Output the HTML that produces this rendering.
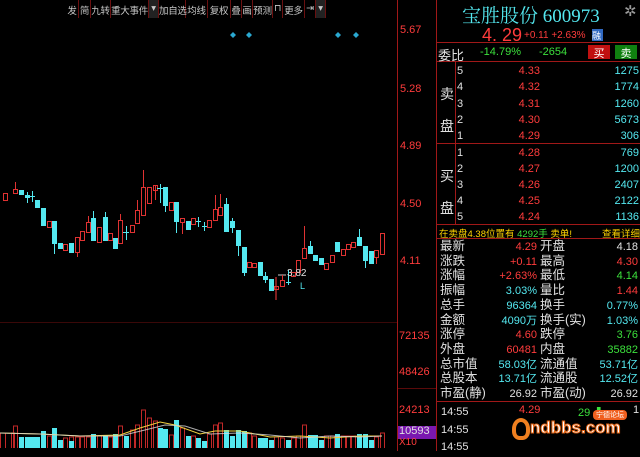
<!DOCTYPE html>
<html><head><meta charset="utf-8"><style>
*{margin:0;padding:0;box-sizing:border-box}
body{width:640px;height:451px;background:#000;overflow:hidden;position:relative;font-family:"Liberation Sans","Noto Sans CJK SC",sans-serif;font-size:12px}
.a{position:absolute;white-space:nowrap}
.r{color:#ff3c3c}.c{color:#54e8f0}.g{color:#3ce03c}.w{color:#e0e0e0}.y{color:#ffd400}
.t{position:absolute;top:0;height:18px;font-size:9.5px;color:#c8c8c8;padding-top:3px;border-right:1px solid #6a1010;text-align:center;white-space:nowrap;overflow:visible;letter-spacing:-0.3px}
.rt{text-align:right}
</style></head><body>
<div class="t" style="left:66px;width:13px">发</div>
<div class="t" style="left:79px;width:12px">简</div>
<div class="t" style="left:91px;width:20px">九转</div>
<div class="t" style="left:111px;width:38px">重大事件</div>
<div class="t" style="left:149px;width:10px;background:#222">▾</div>
<div class="t" style="left:159px;width:27px">加自选</div>
<div class="t" style="left:186px;width:22px">均线</div>
<div class="t" style="left:208px;width:23px">复权</div>
<div class="t" style="left:231px;width:11px">叠</div>
<div class="t" style="left:242px;width:11px">画</div>
<div class="t" style="left:253px;width:20px">预测</div>
<div class="t" style="left:273px;width:10px">⊓</div>
<div class="t" style="left:283px;width:22px">更多</div>
<div class="t" style="left:305px;width:11px">⇥</div>
<div class="t" style="left:316px;width:10px;background:#222">▾</div>
<svg class="a" style="left:0;top:0" width="640" height="451">
<g fill="#2aa8d0"><path d="M233 32l3 3-3 3-3-3z"/><path d="M249 32l3 3-3 3-3-3z"/><path d="M338 32l3 3-3 3-3-3z"/><path d="M356 32l3 3-3 3-3-3z"/></g>
<line x1="397.5" y1="0" x2="397.5" y2="451" stroke="#a01818"/>
<line x1="436.5" y1="0" x2="436.5" y2="451" stroke="#a01818"/>
<line x1="0" y1="322.5" x2="397" y2="322.5" stroke="#3a0808"/>
<line x1="437" y1="42.5" x2="640" y2="42.5" stroke="#a01818"/>
<line x1="437" y1="61.5" x2="640" y2="61.5" stroke="#a01818"/>
<line x1="437" y1="143.5" x2="640" y2="143.5" stroke="#a01818"/>
<line x1="437" y1="224.5" x2="640" y2="224.5" stroke="#a01818"/>
<line x1="437" y1="238.5" x2="640" y2="238.5" stroke="#a01818"/>
<line x1="437" y1="401.5" x2="640" y2="401.5" stroke="#a01818"/>
<line x1="455.5" y1="62" x2="455.5" y2="224" stroke="#a01818"/>
<line x1="398" y1="388.5" x2="436" y2="388.5" stroke="#5a0a0a"/>
<rect x="398" y="426" width="38" height="13" fill="#7a18b0"/>
<line x1="276" y1="277" x2="276" y2="300" stroke="#ff3c3c"/>
<line x1="278" y1="275" x2="286" y2="275" stroke="#ccc"/>
<g stroke-width="1">
<g fill="none" stroke="#e03232">
<rect x="3.5" y="193.5" width="4" height="7"/><rect x="13.5" y="189.5" width="4" height="4"/><line x1="15.5" y1="182" x2="15.5" y2="189"/>
<rect x="47.5" y="221.5" width="4" height="6"/><rect x="63.5" y="244.5" width="4" height="6"/><rect x="75.5" y="237.5" width="4" height="15"/><line x1="77.5" y1="253" x2="77.5" y2="257"/>
<rect x="80.5" y="231.5" width="4" height="9"/><rect x="86.5" y="222.5" width="4" height="10"/><line x1="88.5" y1="216" x2="88.5" y2="222"/>
<rect x="97.5" y="227.5" width="4" height="15"/><rect x="108.5" y="233.5" width="4" height="7"/><rect x="118.5" y="220.5" width="4" height="23"/><line x1="120.5" y1="214" x2="120.5" y2="220"/>
<rect x="130.5" y="225.5" width="4" height="7"/><rect x="135.5" y="210.5" width="4" height="13"/><line x1="137.5" y1="200" x2="137.5" y2="210"/>
<rect x="141.5" y="187.5" width="4" height="28"/><line x1="143.5" y1="170" x2="143.5" y2="187"/><rect x="147.5" y="187.5" width="4" height="16"/><rect x="153.5" y="185.5" width="4" height="5"/><line x1="155.5" y1="185" x2="155.5" y2="200"/>
<rect x="169.5" y="202.5" width="4" height="8"/><rect x="180.5" y="218.5" width="4" height="4"/><line x1="182.5" y1="222" x2="182.5" y2="234"/>
<rect x="191.5" y="218.5" width="4" height="6"/><rect x="207.5" y="220.5" width="4" height="7"/><rect x="213.5" y="209.5" width="4" height="11"/><line x1="215.5" y1="195" x2="215.5" y2="209"/><rect x="218.5" y="207.5" width="4" height="8"/><line x1="220.5" y1="194" x2="220.5" y2="207"/>
<rect x="247.5" y="262.5" width="4" height="5"/><rect x="252.5" y="263.5" width="4" height="4"/><rect x="274.5" y="286.5" width="4" height="3"/><rect x="280.5" y="280.5" width="4" height="6"/><line x1="282.5" y1="275" x2="282.5" y2="280"/>
<rect x="291.5" y="272.5" width="4" height="4"/><rect x="296.5" y="260.5" width="4" height="12"/><rect x="302.5" y="248.5" width="4" height="10"/><line x1="304.5" y1="226" x2="304.5" y2="248"/>
<rect x="324.5" y="263.5" width="4" height="6"/><rect x="330.5" y="255.5" width="4" height="7"/><rect x="341.5" y="249.5" width="4" height="6"/><rect x="346.5" y="244.5" width="4" height="5"/><rect x="351.5" y="242.5" width="4" height="5"/>
<rect x="374.5" y="250.5" width="4" height="7"/><line x1="376.5" y1="257" x2="376.5" y2="264"/><rect x="380.5" y="233.5" width="4" height="21"/>
</g>
<g fill="#54e8f0" stroke="#54e8f0">
<rect x="19.5" y="190.5" width="4" height="4"/><rect x="25.5" y="195.5" width="4" height="2"/><line x1="27.5" y1="192" x2="27.5" y2="203"/><line x1="30" y1="196.5" x2="35" y2="196.5"/><line x1="32.5" y1="191" x2="32.5" y2="202"/>
<rect x="35.5" y="200.5" width="4" height="7"/><rect x="41.5" y="208.5" width="4" height="17"/><rect x="52.5" y="221.5" width="4" height="22"/><line x1="54.5" y1="243" x2="54.5" y2="254"/>
<rect x="58.5" y="243.5" width="4" height="5"/><rect x="69.5" y="243.5" width="4" height="9"/><rect x="91.5" y="218.5" width="4" height="22"/><line x1="93.5" y1="211" x2="93.5" y2="218"/>
<rect x="103.5" y="217.5" width="4" height="23"/><line x1="105.5" y1="212" x2="105.5" y2="217"/><rect x="113.5" y="238.5" width="4" height="10"/><line x1="123" y1="232.5" x2="129" y2="232.5"/><line x1="126.5" y1="226" x2="126.5" y2="240"/>
<line x1="157" y1="188.5" x2="163" y2="188.5"/><line x1="160.5" y1="184" x2="160.5" y2="203"/><rect x="163.5" y="187.5" width="4" height="18"/><line x1="165.5" y1="205" x2="165.5" y2="212"/><rect x="174.5" y="202.5" width="4" height="19"/><line x1="176.5" y1="221" x2="176.5" y2="233"/>
<rect x="186.5" y="221.5" width="4" height="8"/><line x1="196" y1="221.5" x2="201" y2="221.5"/><line x1="198.5" y1="217" x2="198.5" y2="227"/><line x1="202" y1="226.5" x2="207" y2="226.5"/><line x1="204.5" y1="222" x2="204.5" y2="231"/>
<rect x="224.5" y="204.5" width="4" height="27"/><line x1="226.5" y1="198" x2="226.5" y2="204"/><rect x="230.5" y="221.5" width="4" height="6"/><line x1="232.5" y1="218" x2="232.5" y2="233"/><rect x="236.5" y="230.5" width="4" height="15"/><line x1="238.5" y1="245" x2="238.5" y2="256"/>
<rect x="242.5" y="247.5" width="4" height="25"/><line x1="244.5" y1="272" x2="244.5" y2="276"/><rect x="258.5" y="262.5" width="4" height="13"/><rect x="263.5" y="276.5" width="4" height="3"/><line x1="265.5" y1="272" x2="265.5" y2="283"/>
<rect x="269.5" y="279.5" width="4" height="11"/><line x1="286" y1="282.5" x2="291" y2="282.5"/><line x1="288.5" y1="270" x2="288.5" y2="285"/>
<rect x="308.5" y="246.5" width="4" height="7"/><line x1="310.5" y1="241" x2="310.5" y2="246"/><rect x="313.5" y="255.5" width="4" height="5"/><rect x="319.5" y="258.5" width="4" height="6"/><rect x="335.5" y="242.5" width="4" height="9"/><rect x="357.5" y="237.5" width="4" height="8"/><line x1="359.5" y1="229" x2="359.5" y2="237"/>
<rect x="363.5" y="246.5" width="4" height="14"/><line x1="365.5" y1="260" x2="365.5" y2="268"/><rect x="369.5" y="251.5" width="4" height="12"/>
</g>
</g>
<g fill="none" stroke="#c02828">
<path d="M0.5 448V433M5.5 448V433M11.5 448V433H14.5V448M13.5 448V426H17.5V448M47.5 448V436H51.5V448M63.5 448V438H67.5V448M69.5 448V437H73.5V448M75.5 448V437H79.5V448M80.5 448V437H84.5V448M86.5 448V437H90.5V448M97.5 448V436H101.5V448M108.5 448V437H112.5V448M118.5 448V426H122.5V448M130.5 448V430H134.5V448M135.5 448V425H139.5V448M141.5 448V410H145.5V448M147.5 448V418H151.5V448M153.5 448V421H157.5V448M169.5 448V435H173.5V448M180.5 448V428H184.5V448M191.5 448V436H195.5V448M207.5 448V434H211.5V448M213.5 448V425H217.5V448M218.5 448V423H222.5V448M247.5 448V433H251.5V448M252.5 448V436H256.5V448M274.5 448V437H278.5V448M280.5 448V438H284.5V448M291.5 448V438H295.5V448M296.5 448V436H300.5V448M302.5 448V425H306.5V448M324.5 448V436H328.5V448M330.5 448V436H334.5V448M341.5 448V436H345.5V448M346.5 448V436H350.5V448M351.5 448V436H355.5V448M374.5 448V437H378.5V448M380.5 448V433H384.5V448"/>
</g>
<g fill="#54e8f0">
<rect x="19" y="437" width="5" height="11"/><rect x="25" y="437" width="5" height="11"/><rect x="30" y="437" width="5" height="11"/><rect x="35" y="437" width="5" height="11"/><rect x="41" y="431" width="5" height="17"/><rect x="52" y="428" width="5" height="20"/><rect x="58" y="440" width="5" height="8"/><rect x="69" y="441" width="5" height="7"/><rect x="91" y="434" width="5" height="14"/><rect x="103" y="435" width="5" height="13"/><rect x="113" y="434" width="5" height="14"/><rect x="124" y="436" width="5" height="12"/>
<rect x="158" y="428" width="5" height="20"/><rect x="163" y="429" width="5" height="19"/><rect x="174" y="420" width="5" height="28"/><rect x="186" y="436" width="5" height="12"/><rect x="196" y="438" width="5" height="10"/><rect x="202" y="441" width="5" height="7"/>
<rect x="224" y="430" width="5" height="18"/><rect x="230" y="436" width="5" height="12"/><rect x="236" y="430" width="5" height="18"/><rect x="242" y="431" width="5" height="17"/><rect x="258" y="438" width="5" height="10"/><rect x="263" y="438" width="5" height="10"/><rect x="269" y="440" width="5" height="8"/><rect x="286" y="440" width="5" height="8"/>
<rect x="308" y="435" width="5" height="13"/><rect x="313" y="435" width="5" height="13"/><rect x="319" y="440" width="5" height="8"/><rect x="335" y="434" width="5" height="14"/><rect x="357" y="434" width="5" height="14"/><rect x="363" y="434" width="5" height="14"/><rect x="369" y="440" width="5" height="8"/>
</g>
<path d="M0 433 L40 434 L80 436 L120 435 L140 428 L160 422 L175 425 L200 434 L215 431 L240 431 L270 437 L300 436 L330 438 L360 436 L382 436" fill="none" stroke="#f0d040"/>
<path d="M0 433 L40 434 L80 436 L120 436 L145 430 L165 425 L185 426 L210 434 L240 433 L270 435 L300 438 L330 436 L360 437 L382 436" fill="none" stroke="#d8d8d8" opacity=".8"/>
</svg>
<div class="a r" style="left:400px;top:24px;font-size:11px">5.67</div>
<div class="a r" style="left:400px;top:83px;font-size:11px">5.28</div>
<div class="a r" style="left:400px;top:140px;font-size:11px">4.89</div>
<div class="a r" style="left:400px;top:198px;font-size:11px">4.50</div>
<div class="a r" style="left:400px;top:255px;font-size:11px">4.11</div>
<div class="a r" style="left:399px;top:330px;font-size:11px">72135</div>
<div class="a r" style="left:399px;top:366px;font-size:11px">48426</div>
<div class="a r" style="left:399px;top:404px;font-size:11px">24213</div>
<div class="a w" style="left:399px;top:425px;font-size:11px">10593</div>
<div class="a r" style="left:399px;top:437px;font-size:10px">X10</div>
<div class="a w" style="left:287px;top:268px;font-size:10px">3.82</div>
<div class="a c" style="left:300px;top:281px;font-size:9px">L</div>

<div class="a c" style="left:462px;top:1px;font-size:19px;font-family:'Liberation Serif','Noto Serif CJK SC',serif">宝胜股份 600973</div>
<div class="a" style="left:624px;top:2px;color:#999;font-size:15px">✲</div>
<div class="a r" style="left:482px;top:25px;font-size:18px">4. 29</div>
<div class="a r" style="left:524px;top:30px;font-size:10px">+0.11 +2.63%</div>
<div class="a" style="left:592px;top:29px;width:11px;height:12px;background:#3068c0;color:#fff;font-size:9px">融</div>
<div class="a w" style="left:438px;top:45px;font-size:13px">委比</div>
<div class="a g" style="left:480px;top:46px;font-size:11px">-14.79%</div>
<div class="a g" style="left:539px;top:46px;font-size:11px">-2654</div>
<div class="a" style="left:588px;top:45px;width:22px;height:14px;background:#c01010;color:#fff;font-size:11px;text-align:center">买</div>
<div class="a" style="left:615px;top:45px;width:22px;height:14px;background:#108010;color:#fff;font-size:11px;text-align:center">卖</div>
<div class="a w" style="left:440px;top:78px;font-size:14px;line-height:32px">卖<br>盘</div>
<div class="a w" style="left:440px;top:160px;font-size:14px;line-height:32px">买<br>盘</div>
<div class="a w" style="left:457px;top:63px;font-size:11px;line-height:16.3px">5<br>4<br>3<br>2<br>1</div>
<div class="a r rt" style="left:500px;width:40px;top:63px;font-size:11px;line-height:16.3px">4.33<br>4.32<br>4.31<br>4.30<br>4.29</div>
<div class="a c rt" style="left:590px;width:49px;top:63px;font-size:11px;line-height:16.3px">1275<br>1774<br>1260<br>5673<br>306</div>
<div class="a w" style="left:457px;top:145px;font-size:11px;line-height:16px">1<br>2<br>3<br>4<br>5</div>
<div class="a r rt" style="left:500px;width:40px;top:145px;font-size:11px;line-height:16px">4.28<br>4.27<br>4.26<br>4.25<br>4.24</div>
<div class="a c rt" style="left:590px;width:49px;top:145px;font-size:11px;line-height:16px">769<br>1200<br>2407<br>2122<br>1136</div>
<div class="a y" style="left:439px;top:226px;font-size:9.5px">在卖盘4.38位置有 <span class="g">4292手</span> 卖单!</div>
<div class="a y" style="left:602px;top:226px;font-size:9.5px">查看详细</div>
<div class="a w" style="left:440px;top:239px;font-size:12.5px;line-height:14.7px">最新<br>涨跌<br>涨幅<br>振幅<br>总手<br>金额<br>涨停<br>外盘<br>总市值<br>总股本<br>市盈(静)</div>
<div class="a rt" style="left:480px;width:57px;top:240px;font-size:11px;line-height:14.7px"><span class="r">4.29</span><br><span class="r">+0.11</span><br><span class="r">+2.63%</span><br><span class="c">3.03%</span><br><span class="c">96364</span><br><span class="c">4090万</span><br><span class="r">4.60</span><br><span class="r">60481</span><br><span class="c">58.03亿</span><br><span class="c">13.71亿</span><br><span class="w">26.92</span></div>
<div class="a w" style="left:540px;top:239px;font-size:12.5px;line-height:14.7px">开盘<br>最高<br>最低<br>量比<br>换手<br>换手(实)<br>跌停<br>内盘<br>流通值<br>流通股<br>市盈(动)</div>
<div class="a rt" style="left:590px;width:48px;top:240px;font-size:11px;line-height:14.7px"><span class="w">4.18</span><br><span class="r">4.30</span><br><span class="g">4.14</span><br><span class="r">1.44</span><br><span class="c">0.77%</span><br><span class="c">1.03%</span><br><span class="g">3.76</span><br><span class="g">35882</span><br><span class="c">53.71亿</span><br><span class="c">12.52亿</span><br><span class="w">26.92</span></div>
<div class="a w" style="left:441px;top:404px;font-size:11px;line-height:17.5px">14:55<br>14:55<br>14:55</div>
<div class="a r" style="left:519px;top:404px;font-size:11px">4.29</div>
<div class="a g" style="left:578px;top:404px;font-size:11px">29 ⬇</div>
<div class="a w" style="left:633px;top:404px;font-size:11px">1</div>
<div class="a" style="left:512px;top:418px;width:18px;height:22px;border:4px solid #f08020;border-radius:50% 50% 40% 40%"></div>
<div class="a" style="left:530px;top:418px;font-size:17px;font-weight:bold;color:#fff;-webkit-text-stroke:1px #e06010">ndbbs.com</div>
<div class="a" style="left:593px;top:410px;width:34px;height:10px;background:#f06020;border-radius:4px;color:#fff;font-size:7px;text-align:center">宁德论坛</div>
</body></html>
